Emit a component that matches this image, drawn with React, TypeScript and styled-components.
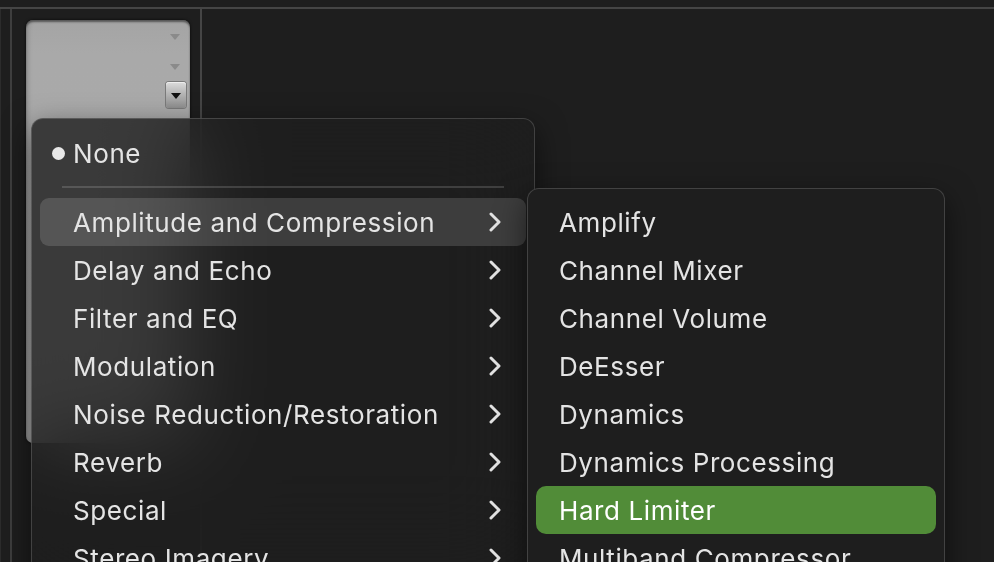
import React from "react";
import styled, { createGlobalStyle } from "styled-components";

const Global = createGlobalStyle`
  html, body {
    margin: 0;
    padding: 0;
    background: #1e1e1e;
    overflow: hidden;
    width: 994px;
    height: 562px;
  }
  #root { width: 994px; height: 562px; }
`;

const Page = styled.div`
  position: relative;
  width: 994px;
  height: 562px;
  background: #1e1e1e;
  font-family: Inter, "Liberation Sans", sans-serif;
  overflow: hidden;
  display: flex;
  flex-direction: column;
`;

const TopBar = styled.div`
  height: 7px;
  border-bottom: 2px solid #454545;
  flex: none;
`;

const Tracks = styled.div`
  flex: 1;
  display: flex;
`;

const EdgeColumn = styled.div`
  width: 10px;
  border-right: 2px solid #3e3e3e;
  box-shadow: inset 1px 0 0 #2c2c2c;
`;

const StripColumn = styled.div`
  width: 174px;
  padding: 11px 0 0 14px;
  border-right: 2px solid #454545;
`;

const GrayPanel = styled.div`
  width: 164px;
  height: 423px;
  border-radius: 7px;
  background: linear-gradient(180deg, #a4a4a4 0%, #a9a9a9 8%, #aaaaaa 100%);
  box-shadow: inset 0 2px 2px rgba(0, 0, 0, 0.45), inset 3px 0 4px rgba(0, 0, 0, 0.12),
    0 0 3px rgba(0, 0, 0, 0.8);
  display: flex;
  flex-direction: column;
  align-items: flex-end;
  padding: 14px 4px 0 0;
  box-sizing: border-box;
`;

const SmallArrow = styled.div<{ $mt: number }>`
  width: 0;
  height: 0;
  margin-top: ${(p) => p.$mt}px;
  margin-right: 6px;
  border-left: 5px solid transparent;
  border-right: 5px solid transparent;
  border-top: 6px solid #8a8a8a;
`;

const DropButton = styled.div`
  margin-top: 12px;
  width: 20px;
  height: 26px;
  border-radius: 3px;
  background: linear-gradient(180deg, #dcdcdc 0%, #bdbdbd 35%, #8e8e8e 100%);
  box-shadow: 0 0 0 1px #7a7a7a, inset 0 1px 0 #eeeeee;
  display: flex;
  align-items: center;
  justify-content: center;
  padding-top: 2px;
  box-sizing: border-box;
  &::after {
    content: "";
    border-left: 5px solid transparent;
    border-right: 5px solid transparent;
    border-top: 6px solid #111;
  }
`;

const Menu = styled.div`
  position: absolute;
  left: 31px;
  top: 118px;
  width: 504px;
  box-sizing: border-box;
  padding: 10px 8px 10px 8px;
  border-radius: 12px;
  border: 1px solid rgba(255, 255, 255, 0.16);
  background: rgba(30, 30, 30, 0.8);
  backdrop-filter: blur(44px);
  box-shadow: 0 10px 30px rgba(0, 0, 0, 0.55);
  display: flex;
  flex-direction: column;
`;

const SubMenu = styled.div`
  position: absolute;
  left: 527px;
  top: 188px;
  width: 418px;
  box-sizing: border-box;
  padding: 9px 8px;
  border-radius: 12px;
  border: 1px solid rgba(255, 255, 255, 0.16);
  background: #1e1e1e;
  box-shadow: 0 10px 30px rgba(0, 0, 0, 0.55);
  display: flex;
  flex-direction: column;
`;

const Row = styled.div<{ $state?: "hover" | "green"; $pl: number; $pr?: number }>`
  height: 48px;
  flex: none;
  display: flex;
  align-items: center;
  padding-left: ${(p) => p.$pl}px;
  padding-right: ${(p) => p.$pr ?? 0}px;
  border-radius: ${(p) => (p.$state === "green" ? 10 : 9)}px;
  background: ${(p) =>
    p.$state === "hover" ? "rgba(255,255,255,0.14)" : p.$state === "green" ? "#518c38" : "transparent"};
  color: ${(p) => (p.$state === "green" ? "#ffffff" : "#e4e4e4")};
  font-size: 26px;
  letter-spacing: 0.6px;
  white-space: nowrap;
  position: relative;
`;

const Label = styled.span`
  flex: 1;
`;

const Bullet = styled.span`
  position: absolute;
  left: 12px;
  top: 18px;
  width: 13px;
  height: 13px;
  border-radius: 50%;
  background: #e8e8e8;
`;

const Separator = styled.div`
  height: 2px;
  margin: 9px 22px 10px;
  background: rgba(255, 255, 255, 0.15);
  flex: none;
`;

const Chevron = () => (
  <svg width="14" height="22" viewBox="0 0 14 22" style={{ flex: "none" }}>
    <polyline
      points="3,3 11,11 3,19"
      fill="none"
      stroke="#e2e2e2"
      strokeWidth="3"
      strokeLinecap="round"
      strokeLinejoin="round"
    />
  </svg>
);

const categories = [
  "Amplitude and Compression",
  "Delay and Echo",
  "Filter and EQ",
  "Modulation",
  "Noise Reduction/Restoration",
  "Reverb",
  "Special",
  "Stereo Imagery",
  "Time and Pitch",
];

const effects = [
  "Amplify",
  "Channel Mixer",
  "Channel Volume",
  "DeEsser",
  "Dynamics",
  "Dynamics Processing",
  "Hard Limiter",
  "Multiband Compressor",
  "Single-band Compressor",
];

export default function App() {
  return (
    <Page>
      <Global />
      <TopBar />
      <Tracks>
        <EdgeColumn />
        <StripColumn>
          <GrayPanel>
            <SmallArrow $mt={0} />
            <SmallArrow $mt={24} />
            <DropButton />
          </GrayPanel>
        </StripColumn>
      </Tracks>
      <Menu>
        <Row $pl={33}>
          <Bullet />
          <Label>None</Label>
        </Row>
        <Separator />
        {categories.map((c, i) => (
          <Row key={c} $pl={33} $pr={24} $state={i === 0 ? "hover" : undefined}>
            <Label>{c}</Label>
            <Chevron />
          </Row>
        ))}
      </Menu>
      <SubMenu>
        {effects.map((e) => (
          <Row key={e} $pl={23} $state={e === "Hard Limiter" ? "green" : undefined}>
            <Label>{e}</Label>
          </Row>
        ))}
      </SubMenu>
    </Page>
  );
}
